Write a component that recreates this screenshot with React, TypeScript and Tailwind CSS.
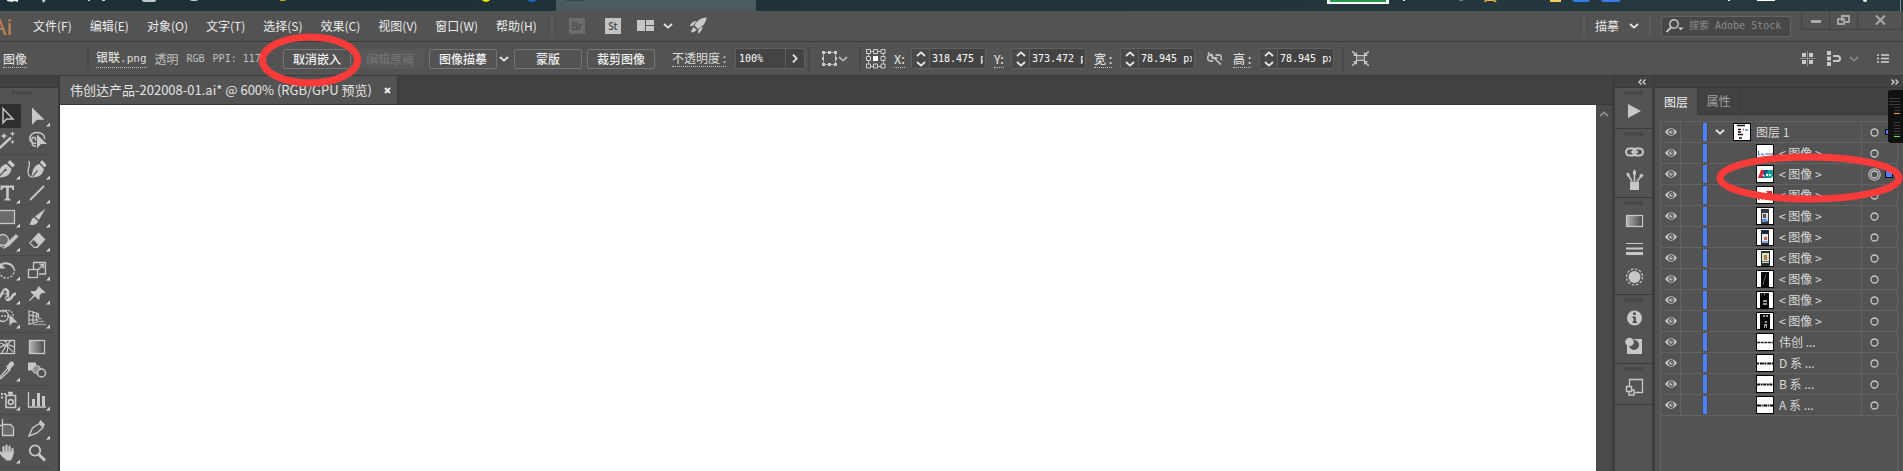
import React from "react";

const CJK = "font-['Noto_Sans_CJK_SC',sans-serif]";

function Svg({ w, h, children, className = "" }: { w: number; h: number; children: React.ReactNode; className?: string }) {
  return (
    <svg width={w} height={h} viewBox={`0 0 ${w} ${h}`} fill="none" className={`shrink-0 ${className}`} aria-hidden="true">
      {children}
    </svg>
  );
}

function Chevron({ className = "" }: { className?: string }) {
  return (
    <Svg w={10} h={6} className={className}>
      <path d="M1 1l4 3.6L9 1" stroke="currentColor" strokeWidth="1.8" />
    </Svg>
  );
}

function Divider() {
  return <span className="h-6 w-0.5 shrink-0 bg-[#494949]" />;
}

/* ---------- desktop strip above the window ---------- */

function DesktopStrip() {
  return (
    <div className="flex h-[11px] justify-between overflow-hidden bg-linear-to-r from-[#1b2f34] to-[#27393e]">
      <Svg w={760} h={11}>
        <rect x="556" y="0" width="200" height="11" fill="#4b5b60" />
        <path d="M7 0h11v2l-4-1-2 1-5-1z" fill="#e8eef0" />
        <path d="M42 0h4l-3 3zM88 0h2v1h-2zM102 0h3v1h-3z" fill="#c9d2d4" />
        <rect x="142" y="-4" width="14" height="6" rx="2" fill="#c4c8ca" />
        <rect x="190" y="-3" width="8" height="4" rx="2" fill="#c4c8ca" />
        <path d="M279 0h8l-3 1h-3z" fill="#d8a91d" />
        <circle cx="486" cy="-3" r="5" fill="#f3e500" />
        <circle cx="532" cy="-4" r="6" fill="#1769c0" />
        <rect x="566" y="0" width="18" height="1" fill="#3c484c" />
      </Svg>
      <Svg w={583} h={11}>
        <rect x="7" y="-4" width="62" height="8" fill="#fff" />
        <rect x="10" y="-4" width="56" height="6" fill="#219a48" />
        <rect x="83" y="0" width="2" height="1" fill="#dfe5e6" />
        <circle cx="141" cy="-2" r="3" fill="#7a8aa0" />
        <path d="M165 0h2l-1 2h-2zM173 0h2l2 2h-3zM167 0h6v1h-6z" fill="#e9b64a" />
        <rect x="230" y="0" width="11" height="2" fill="#f2cf5b" />
        <rect x="252" y="-6" width="18" height="8" rx="3" fill="#2f7cf0" />
        <rect x="281" y="-6" width="20" height="8" rx="3" fill="#3a7bf2" />
        <rect x="408" y="0" width="2" height="1" fill="#fff" />
        <rect x="437" y="0" width="18" height="1" fill="#fff" />
        <circle cx="545" cy="0" r="2" fill="#fff" />
        <rect x="580" y="0" width="1" height="11" fill="#7b8f94" />
      </Svg>
    </div>
  );
}

/* ---------- menu bar ---------- */

const MENUS = ["文件(F)", "编辑(E)", "对象(O)", "文字(T)", "选择(S)", "效果(C)", "视图(V)", "窗口(W)", "帮助(H)"];

function MenuBar() {
  return (
    <header className="flex h-[31px] items-center border-b border-[#3b3b3b]">
      <div className="flex h-full w-[33px] shrink-0 items-center">
        <span className="-ml-2 font-['Noto_Sans',sans-serif] text-[22px] leading-6 font-medium text-[#b77f58]">Ai</span>
      </div>
      <nav className="flex items-center gap-[18px] text-xs whitespace-nowrap text-[#ececec]">
        {MENUS.map((m) => (
          <button key={m} type="button">{m}</button>
        ))}
      </nav>
      <div className="flex items-center gap-4 pl-3.5 text-[#d0d0d0]">
        <span className="h-5 w-0.5 bg-[#5e5e5e]" />
        <button type="button" className="h-4 w-4 bg-[#6b6b6b] font-['Open_Sans',sans-serif] text-[10px] leading-4 font-semibold text-[#4b4b4b]">Br</button>
        <button type="button" className="ml-1 h-4 w-4 bg-[#c3c3c3] font-['Open_Sans',sans-serif] text-[10px] leading-4 font-semibold text-[#484848]">St</button>
        <button type="button" aria-label="排列文档" className="flex items-center gap-2 text-[#e6e6e6]">
          <Svg w={18} h={12}>
            <path d="M0 0h8v11H0zM9 0h8v5H9zM9 6h8v5H9z" fill="#c6c6c6" />
          </Svg>
          <Chevron />
        </button>
        <button type="button" aria-label="GPU 性能">
          <Svg w={18} h={18}>
            <path d="M17.500 .5C12 1 8 3 5.500 8.500L9 12c4.500-2.500 8-6 8.500-11.500zM7.500 4C4 4 2 6 .5 9.500L4.300 8.500zM13.500 9.500c0 3.500-2 5.500-4.500 7.500l.3-4.300zM4.300 10L2 14.500l1.500 1.300L8 13z" fill="#c9c9c9" />
          </Svg>
        </button>
      </div>
      <div className="flex-1" />
      <div className="flex h-full items-center gap-2.5 text-xs text-[#e6e6e6]">
        <span className="h-5 w-0.5 bg-[#5e5e5e]" />
        <button type="button" className="flex h-6 items-center gap-2.5 whitespace-nowrap">
          描摹 <Chevron />
        </button>
        <span className="h-5 w-0.5 bg-[#5e5e5e]" />
        <label className="flex h-[21px] w-[130px] items-center gap-1 rounded-xs border border-[#636363] bg-[#474747] pl-1">
          <Svg w={19} h={14}>
            <circle cx="8" cy="5" r="4.200" stroke="#c8c8c8" strokeWidth="1.500" />
            <path d="M5 8.500L.5 13" stroke="#c8c8c8" strokeWidth="1.800" />
            <path d="M12 8.500h5.500l-2.700 2.800z" fill="#d0d0d0" />
          </Svg>
          <input
            aria-label="搜索 Adobe Stock"
            placeholder="搜索 Adobe Stock"
            className="w-full min-w-0 bg-transparent font-['DejaVu_Sans_Mono','Noto_Sans_CJK_SC',monospace] text-[10px] outline-none placeholder:text-[#8a8a8a]"
          />
        </label>
        <div className="flex h-[19px] self-start rounded-b-xs border border-t-0 border-[#424242] text-[#a9a9a9]">
          <button type="button" aria-label="最小化" className="flex w-7 items-center justify-center border-r border-[#424242]">
            <Svg w={10} h={4} className="mt-1"><rect width="10" height="3" fill="currentColor" /></Svg>
          </button>
          <button type="button" aria-label="还原" className="flex w-7 items-center justify-center border-r border-[#424242]">
            <Svg w={13} h={11}>
              <path d="M5 6V1h7v6H8" stroke="currentColor" strokeWidth="1.800" />
              <rect x="1" y="4" width="6" height="5" stroke="currentColor" strokeWidth="1.800" />
            </Svg>
          </button>
          <button type="button" aria-label="关闭" className="flex w-11 items-center justify-center">
            <Svg w={11} h={10}><path d="M1 .5l9 9M10 .5l-9 9" stroke="currentColor" strokeWidth="2" /></Svg>
          </button>
        </div>
      </div>
    </header>
  );
}

/* ---------- control bar ---------- */

function BarButton({ children }: { children: React.ReactNode }) {
  return (
    <button type="button" className="h-5 w-[68px] shrink-0 rounded-xs border border-[#757575] text-xs leading-4 font-medium whitespace-nowrap text-[#efefef]">
      {children}
    </button>
  );
}

function NumberField({ id, label, value, wide }: { id: string; label: string; value: string; wide?: boolean }) {
  return (
    <div className="flex shrink-0 items-center">
      <label htmlFor={id} className={wide ? "w-[26px] shrink-0" : "w-[17px] shrink-0"}>
        <span className="border-b border-dotted border-[#c0c0c0] text-xs font-medium text-[#dcdcdc]">{label}</span>
      </label>
      <div className="flex h-[21px] w-[75px] rounded-xs border border-[#606060] bg-[#444] pr-0.5">
        <button type="button" aria-label={`${label} 增减`} className="flex w-[18px] shrink-0 flex-col items-center justify-center gap-1 border-r border-[#606060] bg-[#494949] text-[#e8e8e8]">
          <Chevron className="rotate-180" />
          <Chevron />
        </button>
        <input id={id} defaultValue={value} className="w-full min-w-0 bg-transparent pl-0.5 font-['DejaVu_Sans_Mono',monospace] text-[10px] text-white outline-none" />
      </div>
    </div>
  );
}

function ControlBar() {
  return (
    <div className="flex h-[34px] items-center border-b border-[#3b3b3b] text-xs whitespace-nowrap text-[#dcdcdc]">
      <div className="w-[87px] shrink-0 pl-[3px]">
        <span className="border-b border-dotted border-[#c0c0c0] font-medium">图像</span>
      </div>
      <Divider />
      <div className="flex w-[194px] shrink-0 items-center gap-2 pl-[7px]">
        <span className="border-b border-dotted border-[#c0c0c0] font-medium">
          银联<span className="font-['DejaVu_Sans_Mono',monospace] text-[11px]">.png</span>
        </span>
        <span className="text-[#c0c0c0]">透明</span>
        <span className="font-['DejaVu_Sans_Mono',monospace] text-[10px] text-[#c0c0c0]">RGB</span>
        <span className="font-['DejaVu_Sans_Mono',monospace] text-[10px] text-[#c0c0c0]">PPI: 117</span>
      </div>
      <div className="flex shrink-0 items-center gap-[5px]">
        <BarButton>取消嵌入</BarButton>
        <button type="button" disabled className="h-5 w-[68px] bg-[#585858] text-[#767676]">编辑原稿</button>
        <div className="flex items-center">
          <BarButton>图像描摹</BarButton>
          <button type="button" aria-label="描摹预设" className="w-3 pl-0.5 text-[#e6e6e6]"><Chevron /></button>
        </div>
        <BarButton>蒙版</BarButton>
        <BarButton>裁剪图像</BarButton>
      </div>
      <div className="flex w-[150px] shrink-0 items-center justify-between pl-[17px]">
        <label htmlFor="opacity" className="border-b border-dotted border-[#c0c0c0]">不透明度 :</label>
        <div className="flex h-[21px] w-[70px] rounded-xs border border-[#606060] bg-[#444]">
          <input id="opacity" defaultValue="100%" className="w-full min-w-0 bg-transparent pl-[3px] font-['DejaVu_Sans_Mono',monospace] text-[10px] text-white outline-none" />
          <button type="button" aria-label="不透明度选项" className="flex w-[19px] shrink-0 items-center justify-center border-l border-[#606060] text-[#e8e8e8]">
            <Svg w={6} h={9}><path d="M1 .7l3.600 3.800L1 8.300" stroke="currentColor" strokeWidth="1.800" /></Svg>
          </button>
        </div>
      </div>
      <div className="flex shrink-0 items-center gap-[5px] pl-[3px]">
        <Divider />
        <button type="button" aria-label="选择类似的对象" className="flex w-[39px] items-center justify-center gap-px text-[#b0b0b0]">
          <Svg w={15} h={15}>
            <rect x="1.500" y="1.500" width="12" height="12" stroke="#a8a8a8" />
            <path d="M0 0h3v3H0zM12 0h3v3h-3zM0 12h3v3H0zM12 12h3v3h-3zM6 0h3v3H6zM6 12h3v3H6zM0 6h2v3H0zM13 6h2v3h-2z" fill="#c9c9c9" />
          </Svg>
          <Chevron />
        </button>
        <Divider />
        <button type="button" aria-label="参考点" className="mr-2">
          <Svg w={20} h={20}>
            <path d="M2.500 2.500h15v15h-15z" stroke="#bdbdbd" />
            <path d="M.5.5h4v4h-4zM7.500.5h4v4h-4zM15 .5h4v4h-4zM.5 7.500h4v4h-4zM15 7.500h4v4h-4zM.5 15h4v4h-4zM7.500 15h4v4h-4zM15 15h4v4h-4z" fill="#535353" stroke="#cfcfcf" />
            <rect x="7" y="7" width="5" height="5" fill="#fff" />
          </Svg>
        </button>
      </div>
      <div className="flex shrink-0 items-center gap-2">
        <NumberField id="pos-x" label="X:" value="318.475 px" />
        <NumberField id="pos-y" label="Y:" value="373.472 px" />
        <NumberField id="size-w" label="宽 :" value="78.945 px" wide />
        <button type="button" aria-label="约束宽度和高度比例" className="flex w-[22px] justify-center">
          <Svg w={15} h={13}>
            <path d="M6 3H3.500a2.500 2.500 0 000 6H6M8.500 3h3a2.800 2.800 0 012 5M4.500 6h6" stroke="#b9b9b9" strokeWidth="1.800" />
            <path d="M1 .5l13 12" stroke="#c6c6c6" strokeWidth="1.600" />
          </Svg>
        </button>
        <NumberField id="size-h" label="高 :" value="78.945 px" wide />
        <div className="flex items-center gap-2">
          <Divider />
          <button type="button" aria-label="隔离选中的对象">
            <Svg w={17} h={15}>
              <rect x="4.500" y="4.500" width="8" height="5" fill="#6d6d6d" stroke="#c9c9c9" />
              <path d="M0 0l4 4M17 0l-4 4M0 15l4-4M17 15l-4-4" stroke="#c9c9c9" strokeWidth="1.400" />
              <path d="M5 1v4H1zM12 1v4h4zM5 14v-4H1zM12 14v-4h4z" fill="#c9c9c9" />
            </Svg>
          </button>
        </div>
      </div>
      <div className="flex-1" />
      <div className="flex shrink-0 items-center gap-3 pr-3.5">
        <button type="button" aria-label="对齐像素">
          <Svg w={15} h={15}>
            <path d="M2 2h4v4H2zM9 2h4v4H9zM2 9h4v4H2zM9 9h4v4H9z" fill="#c9c9c9" />
            <path d="M7.500 0v15M0 7.500h15" stroke="#8f8f8f" />
          </Svg>
        </button>
        <button type="button" aria-label="对齐" className="flex w-8 items-center justify-between text-[#858585]">
          <Svg w={15} h={15}>
            <path d="M0 0h4v4H0zM0 5.500h4v4H0zM0 11h4v4H0z" fill="#c9c9c9" />
            <path d="M6 5h4.500a2.500 2.500 0 010 5H6" stroke="#c9c9c9" strokeWidth="2" />
          </Svg>
          <Chevron />
        </button>
        <button type="button" aria-label="面板菜单" className="ml-1.5">
          <Svg w={12} h={9}>
            <path d="M0 1h2M0 4.500h2M0 8h2M4 1h8M4 4.500h8M4 8h8" stroke="#d3d3d3" strokeWidth="1.400" />
          </Svg>
        </button>
      </div>
    </div>
  );
}

/* ---------- tools ---------- */

const I = "#c8c8c8";
type Tool = { name: string; art: React.ReactNode; more?: boolean; active?: boolean };

const TOOLS: Tool[][] = [
  [
    { name: "选择", active: true, art: <path d="M12 4.500v14.500l3.600-4h6.400z" stroke={I} strokeWidth="1.400" /> },
    { name: "直接选择", more: true, art: <path d="M11 3.500V21l4.800-5.200H23.500z" fill={I} /> },
    { name: "魔棒", art: <><path d="M8 20.500L20 9.500" stroke={I} strokeWidth="2.400" /><path d="M13 4.500l1 2.500 2.500 1-2.500 1-1 2.500-1-2.500-2.500-1L12 7zM21.500 3l.8 2 2 .8-2 .8-.8 2-.8-2-2-.8 2-.8zM21.500 11.500l.7 1.700 1.700.7-1.700.7-.7 1.700-.7-1.700-1.700-.7 1.700-.7z" fill={I} /></> },
    { name: "套索", art: <><path d="M14 12.500c2-3-1.500-4.500-3-2-1.500 3 1 6 4 4.500M10 14c-3-4 0-9.500 6-9.500 5.500 0 8 3 7.500 6.500M11 15c0 2.500 2 3.500 4 3" stroke={I} strokeWidth="1.500" /><path d="M16 6.500v14l4-4.500h6z" fill={I} /></> },
  ],
  [
    { name: "钢笔", more: true, art: <><path d="M7 20c1-8 3-12 8.500-13l5 5c-1.500 6-4.500 8-12.500 8.500l6-6.500-1-1zM16.500 5.500l2.500-2.500 5 5-2.500 2.500z" fill={I} /><circle cx="14.500" cy="13" r="1.200" fill="#535353" /></> },
    { name: "曲率", more: true, art: <><path d="M10.500 20c1-8 3-12 8-13l4.500 5c-1.500 6-4.500 8-11.500 8.500l5.500-6.500-1-1zM19 5.500l2-2.500 4.500 5-2 2.500z" fill={I} /><path d="M7.500 4c3 3-1 7-.5 11 .3 3.500 2 5 4.500 5" stroke={I} strokeWidth="1.300" /></> },
    { name: "文字", more: true, art: <path d="M9.500 4.500H23V9h-1.500l-.7-2.200h-3V17.500l1.700.5v1.500h-6V18l1.700-.5V6.800h-3L11 9H9.500z" fill={I} /> },
    { name: "直线段", more: true, art: <path d="M9 19L23 5" stroke={I} strokeWidth="1.800" /> },
    { name: "矩形", more: true, art: <rect x="7.500" y="5.500" width="16" height="13" fill="#6b6b6b" stroke={I} strokeWidth="1.300" /> },
    { name: "画笔", more: true, art: <path d="M24.500 3.500L18 15l-4-3.500zM13 12.500l4 3.500c-.5 4-5 4.500-9 3.500 2.500-1 1.500-6 5-7z" fill={I} /> },
    { name: "Shaper", more: true, art: <><circle cx="12" cy="11" r="5.500" fill="#6b6b6b" stroke={I} strokeWidth="1.300" /><path d="M13 19l2-4L25 5.500l2 2L17.500 17zM9 17l5 2.500" fill={I} stroke={I} strokeWidth=".8" /></> },
    { name: "橡皮擦", more: true, art: <><path d="M17.500 3.500l7 7-8 8.500H13l-5-5z" fill={I} /><path d="M9.500 14l3-3.200 4.800 5-2.300 2H13.500z" fill="#535353" /></> },
  ],
  [
    { name: "旋转", more: true, art: <><path d="M9 7.500c4-4 12-2.500 14 3.500" stroke={I} strokeWidth="1.800" /><path d="M23.500 11c0 6-4 9.500-9 9-3-.3-5-2.500-6-5" stroke={I} strokeWidth="1.500" strokeDasharray="2 1.600" /><path d="M8 4v6.500h6.500z" fill={I} /></> },
    { name: "比例缩放", more: true, art: <><path d="M12.500 11V4.500h12V16H18" stroke={I} strokeWidth="1.300" /><rect x="7.500" y="11.500" width="9" height="8" stroke={I} strokeWidth="1.300" /><path d="M17 12l5-5M18.500 6.500H22.500V10.500" stroke={I} strokeWidth="1.400" /></> },
    { name: "宽度", more: true, art: <><path d="M7 16c4-1 5-11 9-8s-3 10 1 10 4-7 8-6" stroke={I} strokeWidth="2.600" /><circle cx="14" cy="10" r="2" fill="#535353" stroke={I} /><circle cx="16" cy="16" r="1.500" fill="#535353" stroke={I} /></> },
    { name: "操控变形", more: true, art: <path d="M17.500 4l7 6.500-2 .8-1.500-.3-2.500 2.500.2 3.500-1.200.8-3.500-3.500-5.500 5-.7-.7 5-5.500L9.500 10l1-1 3.500.2L16.500 6.500z" fill={I} /> },
    { name: "形状生成器", more: true, art: <><circle cx="12" cy="10" r="5.500" stroke={I} strokeWidth="1.300" /><path d="M12 6.500c2-3.500 9-3 10 2 .5 3-1 5-3 6M10 10h8" stroke={I} strokeWidth="1.300" strokeDasharray="2 1" /><path d="M18.500 8.500V20l3-3.500h5z" fill={I} /></> },
    { name: "透视网格", more: true, art: <><path d="M8 4v15M12 5v13M15.500 6.500v10M8 4.500l9.500 3.500v4M8 9l9 1.500M8 14h9M8 18.500l9-3" stroke={I} strokeWidth="1.200" /><path d="M17 12.500h4M15 15.500h8M12 18.500h13" stroke="#9a9a9a" strokeWidth="1.300" /></> },
  ],
  [
    { name: "网格", art: <><rect x="7.500" y="5.500" width="16" height="13" stroke={I} strokeWidth="1.300" /><path d="M8 13c5-4 10-4 15-1M13 5c4 3 5 9 2 14M9 8c4 1 9 4 13 9M20 5.500c-3 3-8 8-9 13" stroke={I} strokeWidth="1.200" /></> },
    { name: "渐变", art: <><defs><linearGradient id="toolGradient"><stop offset="0" stopColor="#b5b5b5" /><stop offset="1" stopColor="#484848" /></linearGradient></defs><rect x="8.500" y="5.500" width="15" height="13" fill="url(#toolGradient)" stroke={I} strokeWidth="1.300" /></> },
    { name: "吸管", more: true, art: <><path d="M17 9L9 18l-1.500 2.500L10.500 19 19 11" stroke={I} strokeWidth="1.400" /><path d="M15 7l2-1 2-3c2-1.500 5 .5 4 3l-3 3-.5 2-1.500 1z" fill={I} /></> },
    { name: "混合", art: <><path d="M7 3.500h8v8H7z" fill={I} /><circle cx="15.500" cy="10.500" r="4" fill="#909090" stroke={I} /><circle cx="20.500" cy="14" r="4" fill="#535353" stroke={I} strokeWidth="1.500" /></> },
  ],
  [
    { name: "符号喷枪", more: true, art: <><path d="M15 7.500h9.500v12H15zM17 4.500h5" stroke={I} strokeWidth="1.600" /><path d="M17.500 4h4v3h-4zM10 5h2v2h-2zM13 5h2v2h-2zM10 8.500h2v2h-2z" fill={I} /><circle cx="19.800" cy="14" r="2.400" stroke={I} strokeWidth="1.600" /></> },
    { name: "柱形图", more: true, art: <><path d="M7.500 4v15H25" stroke={I} strokeWidth="1.300" /><path d="M11 11h3v7h-3zM16 5h3v13h-3zM21 8h3v10h-3z" fill={I} /></> },
  ],
  [
    { name: "画板", art: <><path d="M11.500 2v5M6 8.500h6" stroke={I} strokeWidth="1.300" /><path d="M11.500 7.500h8l3 3v8h-11z" fill="#6b6b6b" stroke={I} strokeWidth="1.300" /></> },
    { name: "切片", more: true, art: <><path d="M8 19l3.500-8 7-4.500 3.500 4-6 5.500z" stroke={I} strokeWidth="1.400" /><path d="M18 5l1.500-2L24 7.500 22.500 10z" fill={I} /></> },
    { name: "抓手", more: true, art: <><path d="M12.500 11V6M15.500 10.500V4.500M18.500 10.500V5.500M21.500 12V8M9.500 11.500l3 4" stroke={I} strokeWidth="2.200" strokeLinecap="round" /><path d="M11.500 10.500h11.100c0 4-1.100 5.500-2.600 9h-5c-1-2-2.500-3-3.500-5z" fill={I} /></> },
    { name: "缩放", art: <><circle cx="14" cy="9.500" r="5.200" stroke={I} strokeWidth="1.800" /><path d="M17.800 13.500L24 19.500" stroke={I} strokeWidth="3" /></> },
  ],
];

function Grip() {
  return (
    <Svg w={20} h={4}>
      <path d="M.5 0v4M2.500 0v4M4.500 0v4M6.500 0v4M8.500 0v4M10.500 0v4M12.500 0v4M14.500 0v4M16.500 0v4M18.500 0v4" stroke="#3f3f3f" />
    </Svg>
  );
}

function Toolbar() {
  return (
    <aside className="w-[60px] shrink-0 overflow-hidden border-r-2 border-[#3a3a3a]">
      <div className="h-3 border-b border-[#3a3a3a] bg-[#424242]" />
      <div className="flex h-4 items-start pt-[3px] pl-3"><Grip /></div>
      <div className="-ml-[9px] w-[61px]">
        {TOOLS.map((group, i) => (
          <div key={i}>
            <div className="grid grid-cols-[30px_30px]">
              {group.map((t) => (
                <button key={t.name} type="button" aria-label={t.name} className={t.active ? "h-6 rounded-xs bg-[#2f2f2f]" : "h-6"}>
                  <Svg w={30} h={24}>
                    {t.art}
                    {t.more && <path d="M29 18.500v4h-4z" fill="#d5d5d5" />}
                  </Svg>
                </button>
              ))}
            </div>
            <div className="my-0.5 h-px bg-[#484848]" />
          </div>
        ))}
      </div>
    </aside>
  );
}

/* ---------- document ---------- */

function DocumentArea() {
  return (
    <main className="flex min-w-0 flex-1 flex-col">
      <div className="flex h-[29px] shrink-0 border-b border-[#3a3a3a] bg-[#424242]">
        <div className="flex w-[338px] items-center justify-between border-r border-[#3a3a3a] bg-[#535353] pr-1.5 pl-2.5 text-[13px] whitespace-nowrap text-[#e4e4e4]">
          <span>伟创达产品-202008-01.ai* @ 600% (RGB/GPU 预览)</span>
          <button type="button" aria-label="关闭文档">
            <Svg w={7} h={7}><path d="M1 1l5 5M6 1L1 6" stroke="#ededed" strokeWidth="2" /></Svg>
          </button>
        </div>
      </div>
      <div className="flex flex-1">
        <div className="flex-1 bg-white" />
        <div className="flex w-4 justify-center bg-[#4a4a4a] pt-1.5 text-[#8c8c8c]">
          <Chevron className="rotate-180" />
        </div>
      </div>
    </main>
  );
}

/* ---------- collapsed panel dock ---------- */

const DOCK: { name: string; art: React.ReactNode }[][] = [
  [{ name: "动作", art: <path d="M8 7v14l13-7z" fill={I} /> }],
  [
    { name: "链接", art: <><rect x="6" y="10.500" width="10" height="7" rx="3.500" stroke={I} strokeWidth="2" /><rect x="13" y="10.500" width="10" height="7" rx="3.500" stroke={I} strokeWidth="2" /><path d="M11 14h7" stroke={I} strokeWidth="1.600" /></> },
    { name: "画笔", art: <><path d="M10 15.500h9V24h-9z" fill={I} /><path d="M12 15L8 9M14.500 15V6M17 15l5-5.500" stroke={I} strokeWidth="1.600" /><path d="M6.500 6.500l3 1 .5 4-3-1.500zM13 8c-.5-2 .5-3.500 1.500-4.500C15.500 4.500 16.500 6 16 8l-1.500 2zM19 10l2.500-2.500 2 2L21 12z" fill={I} /></> },
  ],
  [
    { name: "渐变", art: <><defs><linearGradient id="dockGradient"><stop offset="0" stopColor="#b5b5b5" /><stop offset="1" stopColor="#484848" /></linearGradient></defs><rect x="6.500" y="8.500" width="16" height="11" fill="url(#dockGradient)" stroke={I} strokeWidth="1.200" /></> },
    { name: "描边", art: <path d="M6 8h17v1H6zM6 12.500h17v2H6zM6 17h17v3H6z" fill={I} /> },
    { name: "外观", art: <><circle cx="14.500" cy="14" r="6" fill={I} /><circle cx="14.500" cy="14" r="8" stroke={I} strokeWidth="1.200" strokeDasharray="2.600 1.600" /></> },
  ],
  [
    { name: "信息", art: <><circle cx="14.500" cy="14" r="7.500" fill={I} /><path d="M13.200 8.500h2.600V11h-2.600zM12.500 12.500h3.300v5h1.200v1.500h-4.500v-1.500h1v-3.500h-1z" fill="#4a4a4a" /></> },
    { name: "透明度", art: <><path d="M7 7h15v15H7z" fill={I} /><circle cx="14" cy="13" r="5" fill="#535353" /><path d="M5 5h9v4l-4 5H5z" fill="#535353" /><circle cx="9.500" cy="10" r="4.300" fill={I} /></> },
  ],
  [{ name: "资源导出", art: <><path d="M9.500 14V6.500h13v13H15" stroke={I} strokeWidth="1.300" /><path d="M6.500 13.500h5v5h-5zM9 19v3h5v-5h-2" stroke={I} strokeWidth="1.400" /></> }],
];

function PanelDock() {
  return (
    <aside className="w-[43px] shrink-0 border-x-3 border-[#3d3d3d]">
      <div className="flex h-3 items-center justify-end border-b border-[#3a3a3a] bg-[#424242] pr-1.5">
        <Svg w={8} h={6}><path d="M3.500.5L1 3l2.500 2.500M7.500.5L5 3l2.500 2.500" stroke="#d6d6d6" strokeWidth="1.300" /></Svg>
      </div>
      {DOCK.map((group, i) => (
        <div key={i} className="flex flex-col items-center border-b border-[#3a3a3a] pt-[3px] pb-[3px]">
          <Grip />
          <div className="flex flex-col pt-0.5">
            {group.map((d) => (
              <button key={d.name} type="button" aria-label={d.name} className="h-7">
                <Svg w={28} h={28}>{d.art}</Svg>
              </button>
            ))}
          </div>
        </div>
      ))}
    </aside>
  );
}

/* ---------- layers ---------- */

type Layer = { name: string; thumb: React.ReactNode; selected?: boolean };

const LAYERS: Layer[] = [
  { name: "< 图像 >", thumb: <path d="M1.500 6v4h2M5 8v2h2M9 8v2M11 8v2M13 8v2M15 8v2" stroke="#3f6fb5" /> },
  { name: "< 图像 >", selected: true, thumb: <><path d="M4 4h4L6 12H1z" fill="#e6222c" /><path d="M7 4h5l-2 8H5z" fill="#13548c" /><path d="M11 4h5v6l-2 2H9z" fill="#129b94" /><path d="M6 8v2h2M9.500 10V8h1v2M12 8l1 2 1-2" stroke="#fff" /></> },
  { name: "< 图像 >", thumb: <><path d="M9 4h6v4h-3z" fill="#e0262f" /><path d="M1 12h2M5 12h1M8 12h3M13 12h2" stroke="#d8333a" strokeWidth="1.500" /></> },
  { name: "< 图像 >", thumb: <><path d="M4 1h8v15H4z" fill="#34383d" /><path d="M5 5h6v8H5z" fill="#cfe0f2" /><path d="M6 6h3v4H6z" fill="#6c4a3a" /><path d="M5 11h5v3H5z" fill="#5e93e0" /></> },
  { name: "< 图像 >", thumb: <><path d="M4 1h8v15H4z" fill="#222a36" /><path d="M5 5h6v8H5z" fill="#e8e8ee" /><path d="M7 8h3v3H7z" fill="#c96a4a" /><path d="M5 12h6v2H5z" fill="#86a6ee" /></> },
  { name: "< 图像 >", thumb: <><path d="M4 1h9v15H4z" fill="#26302c" /><path d="M5 3h7v10H5z" fill="#dfe0b4" /><path d="M7 5h3v5H7z" fill="#b27c55" /><path d="M5 11h7v1H5z" fill="#3d76c4" /></> },
  { name: "< 图像 >", thumb: <><path d="M4 1h8v15H4z" fill="#050505" /><path d="M9 3L6 14M5 3h1" stroke="#777" strokeWidth=".8" /></> },
  { name: "< 图像 >", thumb: <><path d="M3 1h9v15H3z" fill="#060606" /><path d="M7 2h1M6 9h4M6 12h4" stroke="#c4c4c4" strokeWidth="1.300" /><path d="M4 2h1" stroke="#e55" /></> },
  { name: "< 图像 >", thumb: <><path d="M3 1h10v15H3z" fill="#080808" /><path d="M6 3h2M9 3h2M8 9h2M7 12h3M7 14h1M9 14h1" stroke="#d0d0d0" strokeWidth="1.300" /></> },
  { name: "伟创 ...", thumb: <path d="M0 8.500h16" stroke="#222" strokeWidth="1.300" strokeDasharray="3 .6" /> },
  { name: "D 系 ...", thumb: <path d="M0 8.500h16" stroke="#111" strokeWidth="1.800" strokeDasharray="2 .8 4 .6" /> },
  { name: "B 系 ...", thumb: <path d="M0 8.500h16" stroke="#111" strokeWidth="1.800" strokeDasharray="3 .6 2 .6" /> },
  { name: "A 系 ...", thumb: <path d="M0 8.500h16" stroke="#000" strokeWidth="2.200" strokeDasharray="4 .7 1 .7" /> },
];

function Thumb({ children }: { children: React.ReactNode }) {
  return (
    <span className="flex h-[18px] w-[18px] shrink-0 overflow-hidden border border-black bg-white">
      <Svg w={16} h={16}>{children}</Svg>
    </span>
  );
}

function LayerRow({ name, thumb, selected, root }: Layer & { root?: boolean }) {
  return (
    <li className="flex h-[21px] border-b border-[#626262]">
      <button type="button" aria-label="切换可视性" className="flex w-5 shrink-0 items-center justify-center border-r border-[#626262]">
        <Svg w={12} h={8}>
          <path d="M0 4C2 1.300 4 .3 6 .3S10 1.300 12 4C10 6.700 8 7.700 6 7.700S2 6.700 0 4z" fill="#c4c4c4" />
          <circle cx="6" cy="4" r="2.300" fill="#c4c4c4" stroke="#4a4a4a" strokeWidth="1.200" />
          <circle cx="6.500" cy="3.600" r=".7" fill="#4a4a4a" />
        </Svg>
      </button>
      <button type="button" aria-label="切换锁定" className="w-[22px] shrink-0 border-r border-[#484848]" />
      <span className="my-px w-1 shrink-0 bg-[#4f80ff]" />
      <span className="w-px shrink-0 bg-[#484848]" />
      <div className={`flex flex-1 items-center gap-[5px] overflow-hidden border-r border-[#626262] text-xs whitespace-nowrap text-[#d8d8d8] ${root ? "pl-[7px]" : "pl-[48px]"}`}>
        {root && (
          <button type="button" aria-label="展开" className="mr-[3px] text-[#e8e8e8]"><Chevron /></button>
        )}
        <Thumb>{thumb}</Thumb>
        <span>{name}</span>
      </div>
      <div className="flex w-[35px] shrink-0 items-center gap-1 pl-1.5">
        <button type="button" aria-label="定位" className="shrink-0">
          <Svg w={13} h={13}>
            {selected && <circle cx="6.500" cy="6.500" r="5.700" stroke="#c8c8c8" strokeWidth="1.100" />}
            <circle cx="6.500" cy="6.500" r="3.500" stroke="#c8c8c8" strokeWidth="1.300" />
          </Svg>
        </button>
        {selected && <span className="h-2 w-2 border border-black bg-[#4f80ff]" />}
        {root && <span className="h-1.5 w-1.5 border border-black bg-[#4f80ff]" />}
      </div>
    </li>
  );
}

function LayersPanel() {
  return (
    <section className="flex w-[248px] shrink-0 flex-col">
      <div className="flex h-3 shrink-0 items-center justify-end border-b border-[#3a3a3a] bg-[#424242] pr-1">
        <Svg w={8} h={6}><path d="M.5.5L3 3 .5 5.500M4.500.5L7 3 4.500 5.500" stroke="#d6d6d6" strokeWidth="1.300" /></Svg>
      </div>
      <div role="tablist" className="flex h-[27px] shrink-0 bg-[#424242] text-xs">
        <button type="button" role="tab" aria-selected="true" className="w-[42px] bg-[#535353] text-[#f0f0f0]">图层</button>
        <button type="button" role="tab" aria-selected="false" className="w-[43px] border-x border-b border-[#3a3a3a] text-[#a0a0a0]">属性</button>
        <div className="flex-1 border-b border-[#3a3a3a]" />
      </div>
      <div className="flex-1 px-[5px] pt-1.5">
        <ul className="h-full border-x border-t border-[#626262]">
          <LayerRow root name="图层 1" thumb={<><path d="M3 1.500h8M4 5.500h3M4 8h3M4 10.500h5M5 14h3" stroke="#111" strokeWidth="1.600" /><path d="M9 5.500h1" stroke="#e0262f" strokeWidth="1.500" /><path d="M11 6h3" stroke="#2d5aa8" strokeWidth="1.200" /></>} />
          {LAYERS.map((l, i) => (
            <LayerRow key={i} {...l} />
          ))}
        </ul>
      </div>
    </section>
  );
}

export default function App() {
  return (
    <div className={`relative flex min-h-screen flex-col overflow-hidden bg-[#535353] ${CJK}`}>
      <DesktopStrip />
      <MenuBar />
      <ControlBar />
      <div className="flex flex-1">
        <Toolbar />
        <DocumentArea />
        <PanelDock />
        <LayersPanel />
      </div>

      <div className="absolute top-[90px] right-0">
        <Svg w={15} h={53}>
          <path d="M3 0h12v53H3a3 3 0 01-3-3V3a3 3 0 013-3z" fill="#111" />
          <path d="M1 8.500h11M1 11.500h11M1 14.500h11M6 17.500h6M6 20.500h6M6 32.500h6M6 35.500h6M6 38.500h6M6 41.500h6M6 44.500h6" stroke="#3c3c3c" />
          <path d="M6 23.500h6" stroke="#f2a52b" />
          <path d="M6 46.500h6" stroke="#6fe03a" />
        </Svg>
      </div>
      <div className="pointer-events-none absolute top-[33px] left-[258px]">
        <Svg w={104} h={54}><ellipse cx="52" cy="27" rx="47.500" ry="23" stroke="#fb3a3a" strokeWidth="7" /></Svg>
      </div>
      <div className="pointer-events-none absolute top-[153px] right-0">
        <Svg w={187} h={50}><ellipse cx="93.500" cy="25" rx="89.500" ry="21" stroke="#fb3a3a" strokeWidth="7" /></Svg>
      </div>
    </div>
  );
}
